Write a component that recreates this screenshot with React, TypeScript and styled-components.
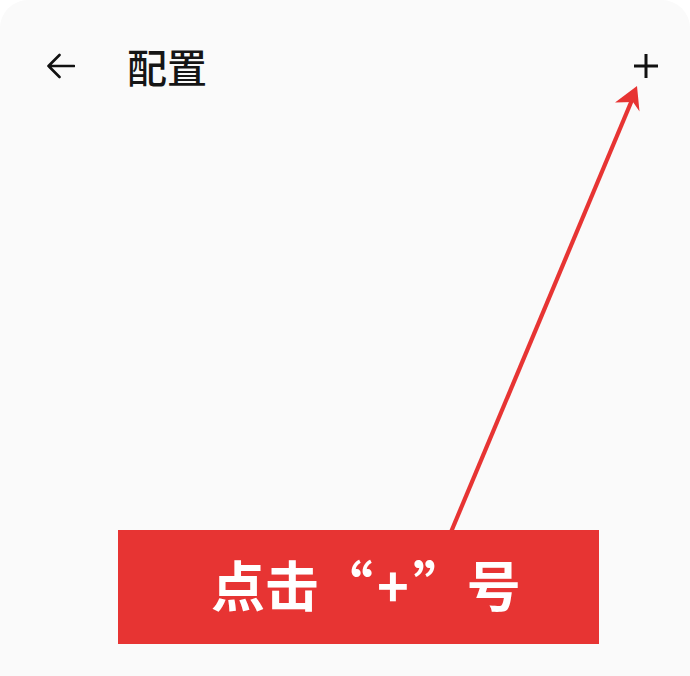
import React from "react";
import styled, { createGlobalStyle } from "styled-components";

const Global = createGlobalStyle`
  html, body { margin: 0; padding: 0; height: 100%; background: #ffffff; }
  #root { min-height: 100vh; }
  * { box-sizing: border-box; }
`;

const Page = styled.div`
  position: relative;
  width: 690px;
  height: 676px;
  background: #fafafa;
  border-radius: 28px 28px 0 0;
  display: flex;
  flex-direction: column;
  font-family: "Noto Sans CJK SC", "Noto Sans", sans-serif;
  overflow: hidden;
`;

const Header = styled.header`
  height: 132px;
  display: flex;
  align-items: center;
  padding: 0 31px 0 46px;
`;

const IconButton = styled.div`
  display: flex;
  align-items: center;
  justify-content: center;
  color: #111;
`;

const Title = styled.h1`
  margin: 0 0 0 52px;
  font-size: 40px;
  font-weight: 500;
  color: #151515;
  line-height: 1;
  flex: 1;
`;

const Spacer = styled.div`
  flex: 1;
`;

const Callout = styled.div`
  margin: 0 0 32px 118px;
  width: 481px;
  height: 114px;
  background: #e73433;
  display: flex;
  align-items: center;
  padding: 0 0 6px 93px;
  color: #ffffff;
  font-size: 54px;
  font-weight: 700;
  line-height: 1;
  white-space: nowrap;
`;

const PlusSign = styled.span`
  margin: 0 4px;
`;

const Overlay = styled.svg`
  position: absolute;
  left: 0;
  top: 0;
  pointer-events: none;
`;

export default function App() {
  return (
    <>
      <Global />
      <Page>
        <Header>
          <IconButton>
            <svg width="29" height="26" viewBox="0 0 29 26" fill="none">
              <path d="M28 13H2.5M13.5 2L2.5 13L13.5 24" stroke="currentColor" strokeWidth="2.6" strokeLinecap="round" strokeLinejoin="round" />
            </svg>
          </IconButton>
          <Title>配置</Title>
          <IconButton>
            <svg width="26" height="26" viewBox="0 0 26 26" fill="none">
              <path d="M13 1V25M1 13H25" stroke="currentColor" strokeWidth="3" />
            </svg>
          </IconButton>
        </Header>
        <Spacer />
        <Callout>
          点击“<PlusSign>+</PlusSign>”号
        </Callout>
        <Overlay width="690" height="676" viewBox="0 0 690 676">
          <line x1="451" y1="532" x2="632" y2="100" stroke="#e73433" strokeWidth="4.2" />
          <polygon points="637,86 615,102.5 633,102 639.5,111.5" fill="#e73433" />
        </Overlay>
      </Page>
    </>
  );
}
